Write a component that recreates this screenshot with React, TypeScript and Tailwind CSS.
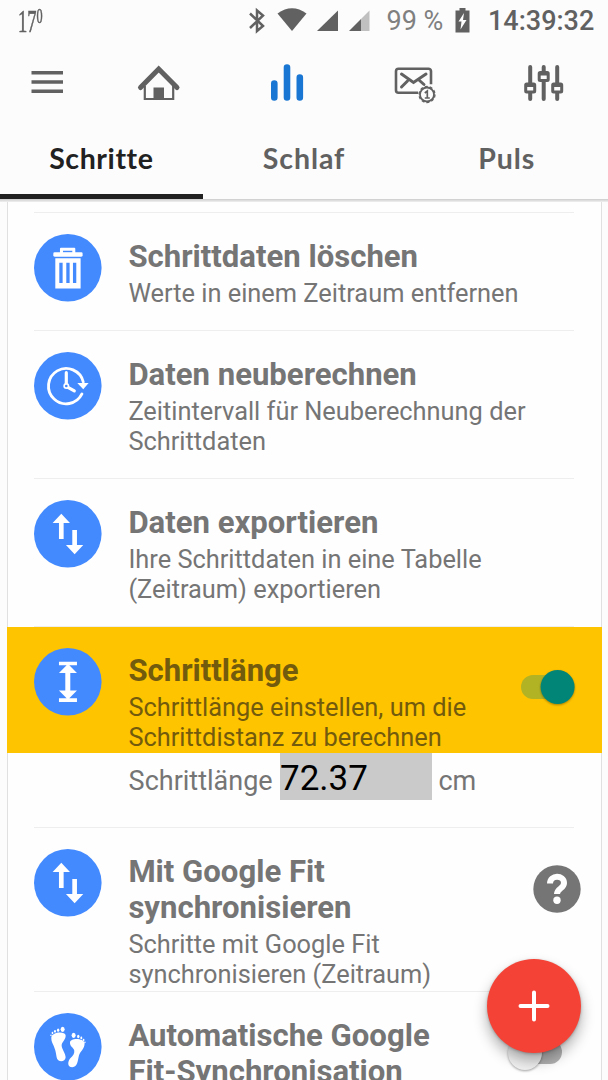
import type { ReactNode } from "react";

const DARK = "#616161";

function Disc({ children }: { children: ReactNode }) {
  return (
    <svg viewBox="0 0 203 203" className="mt-[20.500px] -ml-[0.500px] h-[67.6px] w-[67.6px] shrink-0 overflow-visible" fill="#fff">
      <circle cx="101.5" cy="101.5" r="101.5" fill="#448aff" />
      {children}
    </svg>
  );
}

const trash = (
  <>
    <path fillRule="evenodd" d="M78 58V44q0-3 3-3h40q3 0 3 3v14zM87 50v6h28v-6z" />
    <rect x="58" y="55" width="88" height="13" rx="4" />
    <path fillRule="evenodd" d="M64 73h76v91H64zM76 86v61h10V86zM97 86v61h10V86zM117 86v61h10V86z" />
  </>
);

const clock = (
  <>
    <path d="M144 126A53 53 0 1 1 148 90" fill="none" stroke="#fff" strokeWidth="8.5" strokeLinecap="round" />
    <path d="M130 93h34l-16 19z" />
    <path d="M97 62v36M102 106l19 11" fill="none" stroke="#fff" strokeWidth="9.5" strokeLinecap="round" />
    <circle cx="97" cy="102" r="6.5" fill="#448aff" stroke="#fff" strokeWidth="5" />
  </>
);

const upDown = <path d="M82 41l26 28H89v48H75V69H56zM115 90h14v45h19l-26 28-26-28h19z" />;

const height = (
  <path d="M75 41h54v11h-23l23 23h-20v53h20l-23 23h23v11H75v-11h23l-23-23h19V75H75l23-23H75z" />
);

const feet = (
  <g transform="translate(-101 -547)">
    <path d="M153 622C152 604 194 600 196 614C197 628 184 634 184 645C185 656 196 668 196 680C195 696 171 696 169 680C167 662 164 655 160 645C156 637 153 632 153 622Z" />
    <ellipse cx="187" cy="596" rx="6" ry="8" />
    <ellipse cx="173.500" cy="598.500" rx="3.600" ry="5" />
    <ellipse cx="164" cy="602" rx="3" ry="4.200" />
    <ellipse cx="156.500" cy="607" rx="2.600" ry="3.500" />
    <circle cx="152" cy="614" r="2.300" />
    <path d="M209 636C209 620 252 622 253 638C253 655 240 662 236 675C232 690 232 710 216 710C200 710 202 692 210 683C218 676 223 668 222 660C220 650 209 648 209 636Z" />
    <ellipse cx="220" cy="614" rx="6" ry="8" />
    <ellipse cx="234" cy="617.500" rx="3.600" ry="5" />
    <ellipse cx="243" cy="622" rx="3" ry="4.200" />
    <ellipse cx="250" cy="628" rx="2.600" ry="3.500" />
    <circle cx="254" cy="635" r="2.300" />
  </g>
);

function Row({
  icon,
  title,
  text,
  size,
  trailing,
  highlight,
  children,
}: {
  icon: ReactNode;
  title: ReactNode;
  text?: ReactNode;
  size: string;
  trailing?: ReactNode;
  highlight?: boolean;
  children?: ReactNode;
}) {
  return (
    <section className={`shrink-0 ${size}`}>
      <div className="mr-[27px] ml-[26px] h-px bg-[#eeeeee]" />
      <div className={`flex pl-[26px] ${highlight ? "-mx-px h-[126px] bg-[#ffc400] pl-[27px] text-[#735b0d]" : ""}`}>
        <Disc>{icon}</Disc>
        <div className="ml-[27.300px] flex-1 whitespace-nowrap pt-[26px]">
          <h2 className="text-[31.100px] leading-[36px] font-bold">{title}</h2>
          {text && <p className="mt-[3px] text-[25.380px] leading-[30px]">{text}</p>}
        </div>
        {trailing}
      </div>
      {children}
    </section>
  );
}

function StatusBar() {
  return (
    <div className="flex h-[42px] shrink-0 items-center text-[#616161]">
      <span className="ml-[18px] w-[229px]">
        <span className="inline-flex origin-left scale-x-[0.580] items-start font-['Liberation_Serif',serif] text-[32px] leading-[36px] [-webkit-text-stroke:0.600px_#616161]">
          17<span className="text-[21px] leading-[27px]">0</span>
        </span>
      </span>
      <svg className="h-[42px] w-[127px] shrink-0" viewBox="247 0 127 42" fill={DARK}>
        <path d="M250 13.500l13 12.500-6 5V10.500l6 5L250 28" fill="none" stroke={DARK} strokeWidth="2.500" />
        <path d="M277.500 13.500Q292 3 306.500 13.500L292 31z" />
        <path d="M317 31L338 10.500V31z" />
        <path d="M361 19L369.500 10.500V31H361z" fill="#c0c0c0" />
        <path d="M349 31l12-12v12z" />
      </svg>
      <span className="ml-[12.500px] w-[67.500px] whitespace-nowrap text-[27px] leading-[44px] text-[#808080]">99 %</span>
      <svg className="h-[42px] w-4 shrink-0" viewBox="455 0 16 42" fill={DARK}>
        <path d="M456.500 10.500h4V8h6v2.500h4V32.500h-14z" />
        <path d="M465 13l-5.500 8.500h3l-1 8 6-9.500h-3.500z" fill="#fff" />
      </svg>
      <span className="ml-[18px] whitespace-nowrap text-[27px] leading-[44px] font-medium">14:39:32</span>
    </div>
  );
}

function Toolbar() {
  return (
    <svg viewBox="0 42 608 78" className="h-[78px] w-[608px] shrink-0" fill="none" stroke={DARK}>
      <path d="M31.500 72.800h31.500M31.500 82h31.500M31.500 91.200h31.500" strokeWidth="3.400" />
      <path d="M140.500 87.500L158.700 69l18.300 18.500" strokeWidth="5" strokeLinecap="round" />
      <path d="M144.800 86v13h28.400V86" strokeWidth="2.200" />
      <rect x="153.500" y="87.500" width="10.500" height="12" fill={DARK} stroke="none" />
      <path d="M274.300 83.500v14M287 67.500v30M299.800 77.500v20" stroke="#1976d2" strokeWidth="6.600" strokeLinecap="round" />
      <path d="M418 92.800H398.500a2.500 2.500 0 0 1-2.500-2.500v-19a2.500 2.500 0 0 1 2.500-2.500h30a2.500 2.500 0 0 1 2.500 2.500v13" strokeWidth="2.600" />
      <path d="M401.500 74l12 8.500 12.500-8.500M401.500 87l6-6M419.500 80.500l4.500 4" strokeWidth="3" strokeLinecap="round" />
      <circle cx="427" cy="94.500" r="7" strokeWidth="1.800" />
      <circle cx="427" cy="94.500" r="8" strokeWidth="1.300" strokeDasharray="3 2.030" />
      <path d="M424.800 93l2.500-2v7M424.800 98h5" strokeWidth="1.700" />
      <path d="M530.200 67v32M543.700 67v32M557.200 67v32" strokeWidth="4" strokeLinecap="round" />
      <g fill="#fcfcfc" strokeWidth="3">
        <rect x="525.700" y="84" width="9" height="8" rx="1" />
        <rect x="539.200" y="72.500" width="9" height="8" rx="1" />
        <rect x="552.700" y="84" width="9" height="8" rx="1" />
      </g>
      <path d="M526 85.700h9M539.500 74.200h9M553 85.700h9" strokeWidth="2.500" />
    </svg>
  );
}

function Tabs() {
  return (
    <nav className="grid h-[79px] shrink-0 grid-cols-3 text-center font-['Lato',sans-serif] text-[28.500px] leading-[76px] font-bold text-[#616161]">
      <div className="h-[79px] border-b-[5px] border-[#212121] text-[#212121]">
        <span className="tracking-[0.600px]">Schritte</span>
      </div>
      <div><span className="tracking-[0.900px]">Schlaf</span></div>
      <div><span className="tracking-[0.900px]">Puls</span></div>
    </nav>
  );
}

export default function App() {
  return (
    <div className="relative flex h-[1080px] w-[608px] flex-col overflow-hidden bg-[#fcfcfc] font-['Roboto',sans-serif] text-[#757575]">
      <StatusBar />
      <Toolbar />
      <Tabs />
      <div className="h-[3px] shrink-0 bg-gradient-to-b from-[#cccccc] to-[#f0f0f0]" />
      <main className="ml-[7px] flex min-h-0 w-[595px] flex-1 flex-col border-x border-[#e0e0e0] bg-[#fefefe] pt-[10px]">
        <Row icon={trash} size="h-[118px]" title="Schrittdaten löschen" text="Werte in einem Zeitraum entfernen" />
        <Row
          icon={clock}
          size="h-[148px]"
          title="Daten neuberechnen"
          text={<>Zeitintervall für Neuberechnung der<br />Schrittdaten</>}
        />
        <Row
          icon={upDown}
          size="h-[148px]"
          title="Daten exportieren"
          text={<>Ihre Schrittdaten in eine Tabelle<br />(Zeitraum) exportieren</>}
        />
        <Row
          icon={height}
          size="h-[201px]"
          highlight
          title="Schrittlänge"
          text={<>Schrittlänge einstellen, um die<br />Schrittdistanz zu berechnen</>}
          trailing={
            <svg className="mt-[39px] mr-[22px] h-[44px] w-[60px] shrink-0 overflow-visible" viewBox="0 0 60 44">
              <rect x="1" y="9" width="48" height="24" rx="12" fill="#b2b324" />
              <circle cx="37.600" cy="21" r="17" fill="#008577" className="drop-shadow-[0_1px_1px_rgba(0,0,0,0.350)]" />
            </svg>
          }
        >
          <div className="flex h-[47px] items-start pl-[120.600px] text-[27px] leading-[57px] whitespace-nowrap">
            <span className="w-[151.400px]">Schrittlänge</span>
            <span className="h-[47px] w-[152px] bg-[#cacaca] text-[35px] leading-[51px] text-black">72.37</span>
            <span className="ml-[6.500px]">cm</span>
          </div>
        </Row>
        <Row
          icon={upDown}
          size="h-[164px]"
          title={<>Mit Google Fit<br />synchronisieren</>}
          text={<>Schritte mit Google Fit<br />synchronisieren (Zeitraum)</>}
          trailing={
            <svg className="mt-[37px] mr-[20px] h-[48px] w-[48px] shrink-0" viewBox="0 0 48 48">
              <circle cx="24" cy="24" r="23.700" fill="#757575" />
              <path d="M17 18.500C17 9.500 31 9.500 31 18C31 23.500 24 23.500 24 29" fill="none" stroke="#fff" strokeWidth="6" />
              <circle cx="24" cy="35.300" r="3.700" fill="#fff" />
            </svg>
          }
        />
        <Row
          icon={feet}
          size="h-[120px]"
          title={<>Automatische Google<br />Fit-Synchronisation</>}
          trailing={
            <svg className="mt-[39px] mr-[21px] h-[44px] w-[74px] shrink-0 overflow-visible" viewBox="0 0 74 44">
              <rect x="8" y="9" width="48" height="24" rx="12" fill="#b1b1b1" />
              <circle cx="19" cy="22" r="17" fill="#f1f1f1" className="drop-shadow-[0_1px_1px_rgba(0,0,0,0.350)]" />
            </svg>
          }
        />
      </main>
      <button className="absolute top-[958.500px] left-[486.500px] flex h-[94.500px] w-[94.500px] items-center justify-center rounded-full bg-[#f44336] shadow-[0_8px_14px_rgba(0,0,0,0.300),0_1px_3px_rgba(0,0,0,0.250)]">
        <svg className="h-[32px] w-[32px]" viewBox="0 0 32 32" fill="none" stroke="#fff" strokeWidth="4" strokeLinecap="round">
          <path d="M2.500 16h27M16 2.500v27" />
        </svg>
      </button>
    </div>
  );
}
